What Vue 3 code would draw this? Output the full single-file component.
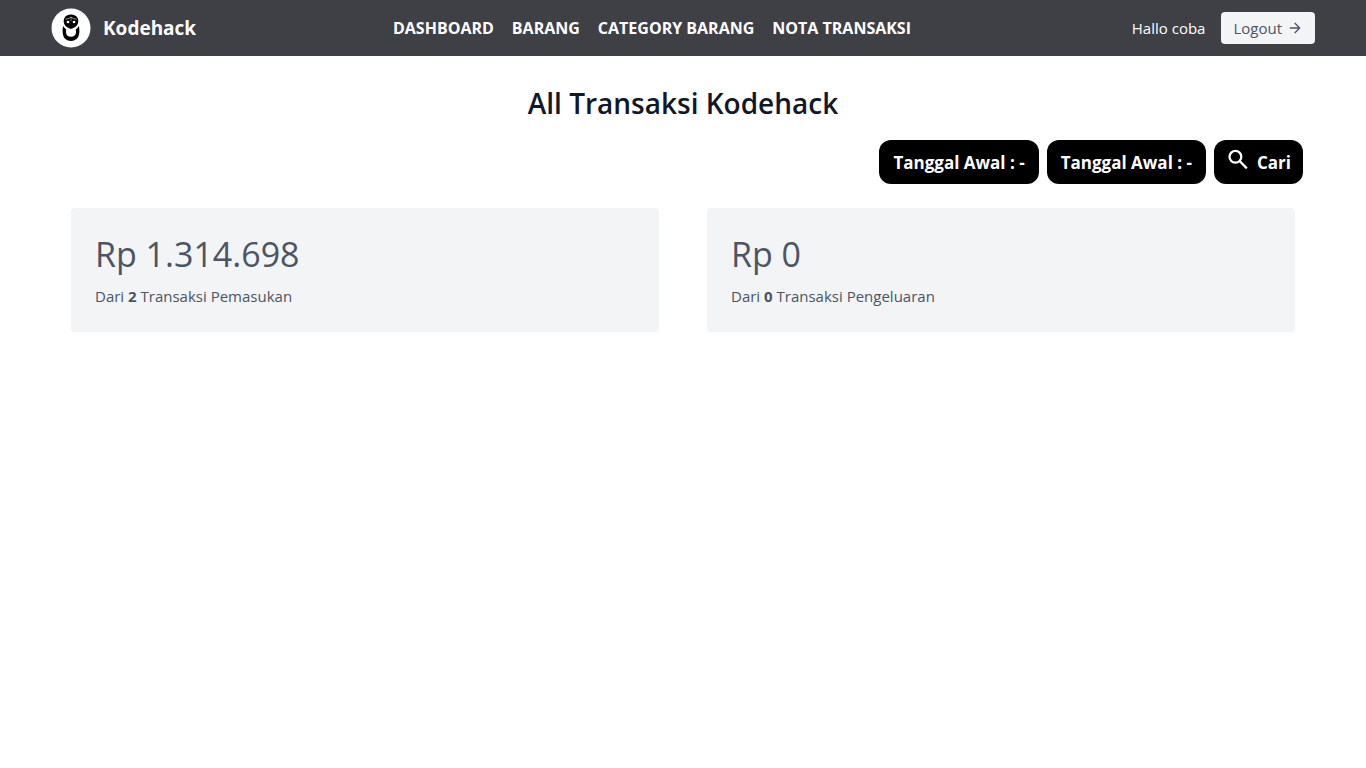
<script setup>
const links = ['DASHBOARD', 'BARANG', 'CATEGORY BARANG', 'NOTA TRANSAKSI']
const filters = ['Tanggal Awal : -', 'Tanggal Awal : -']
const cards = [
  { amount: 'Rp 1.314.698', count: 2, label: 'Transaksi Pemasukan' },
  { amount: 'Rp 0', count: 0, label: 'Transaksi Pengeluaran' },
]
</script>

<template>
  <header class="header">
    <div class="bar">
      <a class="brand" href="#">
        <svg class="logo" viewBox="0 0 40 40" aria-hidden="true">
          <circle cx="20" cy="20" r="19.5" fill="#fff" />
          <path d="M12.300 18c-.9 2-.8 5-.5 7.500.6 4.700 3.800 7.500 8.200 7.500s7.600-2.800 8.200-7.500c.3-2.500.4-5.500-.5-7.500-.7 1.500-1.700 2.700-3 3.600.4 1 .5 2 .3 3.200-.4 2.600-2 4-5 4s-4.600-1.400-5-4c-.2-1.200-.1-2.200.3-3.200-1.300-.9-2.300-2.100-3-3.600z" fill="#000" />
          <path d="M20 6.600c3 0 5.600 1.300 6.700 3.700 1 2.300.8 5-.8 7.200-1.300 1.600-3.500 2.600-5.900 3.400-2.400-.8-4.600-1.800-5.900-3.400-1.600-2.200-1.800-4.900-.8-7.200 1.100-2.400 3.700-3.700 6.700-3.700z" fill="#000" />
          <path d="M14.500 11.200c2.200-.2 4-.9 5.500-2.200 1.500 1.300 3.300 2 5.500 2.200" fill="none" stroke="#fff" stroke-width="0.6" />
          <path d="M20 9v4" stroke="#fff" stroke-width="0.5" />
          <circle cx="17" cy="14" r="1.300" fill="#fff" />
          <circle cx="23" cy="14" r="1.300" fill="#fff" />
        </svg>
        <span class="name">Kodehack</span>
      </a>
      <nav class="nav">
        <a v-for="link in links" :key="link" class="link" href="#">{{ link }}</a>
      </nav>
      <div class="user">
        <span>Hallo coba</span>
        <button class="logout" type="button">
          Logout
          <svg class="arrow" viewBox="0 0 24 24" aria-hidden="true">
            <path d="M5 12h14M12 5l7 7-7 7" />
          </svg>
        </button>
      </div>
    </div>
  </header>
  <main class="main">
    <h1 class="title">All Transaksi Kodehack</h1>
    <div class="filters">
      <button v-for="(filter, i) in filters" :key="i" class="pill" type="button">{{ filter }}</button>
      <button class="pill search" type="button">
        <svg class="glass" viewBox="0 0 24 24" aria-hidden="true">
          <circle cx="9.400" cy="7.800" r="5.900" />
          <path d="M13.600 12l7.200 7.400" />
        </svg>
        Cari
      </button>
    </div>
    <section class="cards">
      <article v-for="card in cards" :key="card.label" class="card">
        <h2 class="amount">{{ card.amount }}</h2>
        <p class="note">Dari <strong>{{ card.count }}</strong> {{ card.label }}</p>
      </article>
    </section>
  </main>
</template>

<style>
body {
  margin: 0;
  background: #fff;
  font-family: "Segoe UI", "Open Sans", "Noto Sans", sans-serif;
  font-size: 15px;
  line-height: 24px;
}
</style>

<style scoped>
.header {
  background: #3f3f46;
  color: #fff;
}
.bar {
  display: flex;
  align-items: center;
  justify-content: space-between;
  box-sizing: border-box;
  max-width: 1280px;
  margin: 0 auto;
  padding: 8px;
}
.brand {
  display: flex;
  align-items: center;
  gap: 12px;
  color: #fff;
  text-decoration: none;
}
.logo {
  width: 40px;
  height: 40px;
}
.name {
  font-size: 19px;
  font-weight: 700;
}
.nav {
  display: flex;
  gap: 18px;
  margin-right: 24px;
}
.link {
  color: #fff;
  font-size: 16px;
  font-weight: 700;
  text-decoration: none;
}
.user {
  display: flex;
  align-items: center;
  gap: 16px;
}
button {
  border: 0;
  font: inherit;
  cursor: pointer;
}
.logout {
  display: flex;
  align-items: center;
  gap: 5px;
  padding: 4px 12px;
  border-radius: 4px;
  background: #f3f4f6;
  color: #4b5563;
}
.arrow {
  width: 16px;
  height: 16px;
  fill: none;
  stroke: currentColor;
  stroke-width: 2;
  stroke-linecap: round;
  stroke-linejoin: round;
}
.main {
  box-sizing: border-box;
  max-width: 1280px;
  margin: 0 auto;
  padding: 28px 20px;
}
.title {
  margin: 0;
  color: #111827;
  font-size: 28px;
  font-weight: 600;
  line-height: 38px;
  text-align: center;
}
.filters {
  display: flex;
  justify-content: flex-end;
  gap: 8px;
  margin-top: 18px;
}
.pill {
  padding: 9px 14px 7px;
  border-radius: 12px;
  background: #000;
  color: #fff;
  font-size: 17px;
  font-weight: 700;
  line-height: 28px;
}
.search {
  display: flex;
  gap: 7px;
  padding: 9px 12px 7px;
}
.glass {
  width: 24px;
  height: 24px;
  fill: none;
  stroke: #fff;
  stroke-width: 2.3;
}
.cards {
  display: grid;
  grid-template-columns: 1fr 1fr;
  gap: 48px;
  margin: 24px 8px 0;
}
.card {
  padding: 24px;
  border-radius: 4px;
  background: #f3f4f6;
  color: #4b5563;
}
.amount {
  margin: 0 0 8px;
  font-size: 34px;
  font-weight: 400;
  line-height: 44px;
}
.note {
  margin: 0;
}
</style>
